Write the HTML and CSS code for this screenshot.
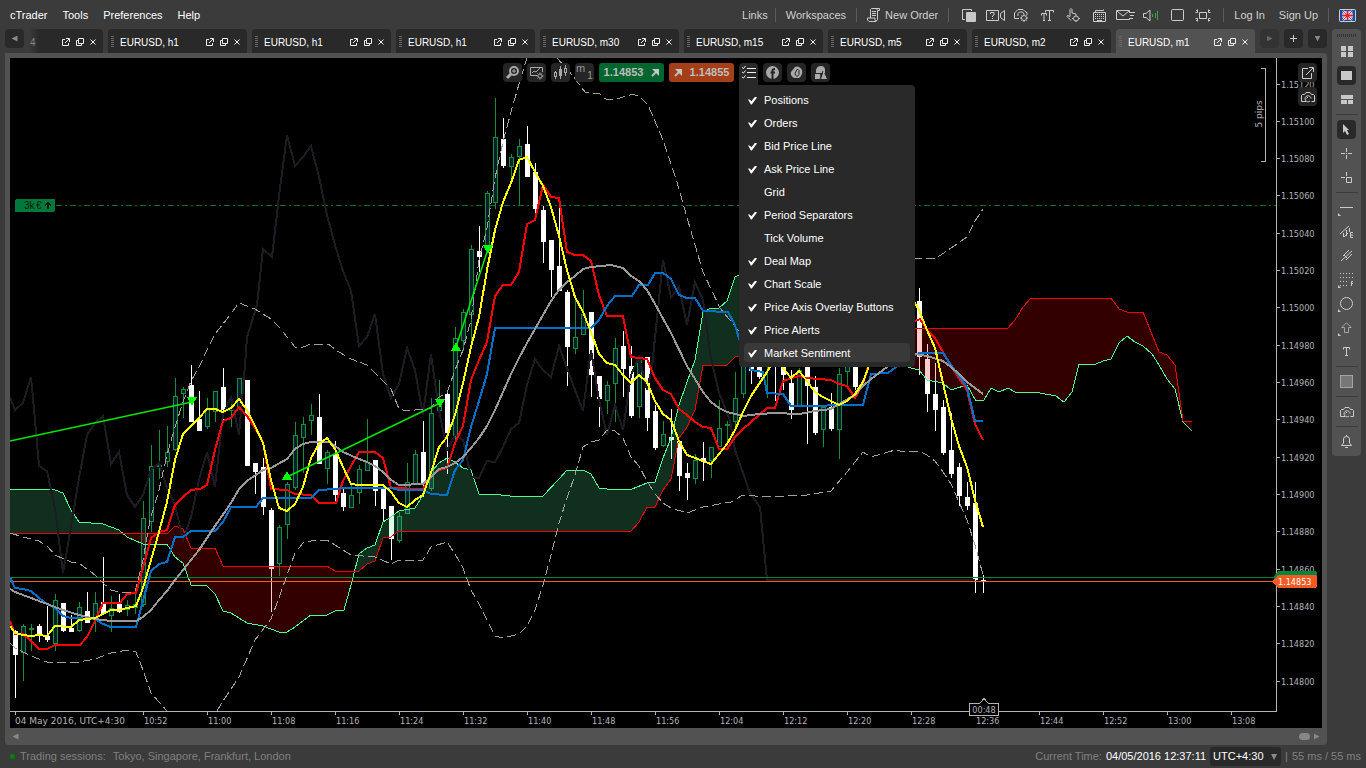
FILE: index.html
```html
<!DOCTYPE html>
<html lang="en">
<head>
    <meta charset="UTF-8">
    <meta name="viewport" content="width=device-width, initial-scale=1.0">
    <title>cTrader</title>
    <link rel="stylesheet" href="styles.css">
</head>
<body>

    <!-- Shared icons -->
    <svg class="sprite" aria-hidden="true">
        <symbol id="i-open" viewBox="0 0 8 8"><path d="M3 1.500H.5v6h6V5M4 .5h3.500V4M7 1 3 5" /></symbol>
        <symbol id="i-copy" viewBox="0 0 8 8"><path d="M2.500.5h5v5h-5zM2 2.500H.5v5h5V6" /></symbol>
        <symbol id="i-close" viewBox="0 0 6 6"><path d="m.5.5 5 5m0-5-5 5" /></symbol>
        <symbol id="i-camera" viewBox="0 0 14 12"><path d="M1.500 10.500H.5v-6l1-1h2l1.500-2h4l1.500 2h2l1 1v6h-3M10 7.500a3 3 0 1 0-1 2.500M1 10.500h4M5.500 7.500l1.500-1.500" /></symbol>
    </svg>

    <header class="menubar">
        <nav class="menu-left">
            <a href="#">cTrader</a>
            <a href="#">Tools</a>
            <a href="#">Preferences</a>
            <a href="#">Help</a>
        </nav>
        <div class="menu-right">
            <a href="#">Links</a>
            <span class="sep"></span>
            <a href="#">Workspaces</a>
            <span class="sep"></span>
            <a href="#" class="new-order">
                <svg width="13" height="14" viewBox="0 0 13 14"><path d="M3.500 10V1.500l1-1h8v2h-2v9l-1.500 2H2l-1.500-1.500V10H8v2l1 1.500M5 3.500h4M5 5.500h4M5 7.500h4M10 2V.5" /></svg>
                New Order
            </a>
            <span class="sep"></span>
            <div class="icons">
                <button aria-label="Layout"><svg width="14" height="13" viewBox="0 0 14 13"><rect class="fill" x="4" y="3" width="10" height="10" rx="1" /><path d="M3 10.500H.5v-10h9V2" /></svg></button>
                <button aria-label="Video help"><svg width="19" height="13" viewBox="0 0 19 13"><path d="M.5 1.500h12v10H.5zM18.500 1.500v10l-4-3v-4zM4.500 5V3.500h3.500V6L6.500 7v1M6.500 9v1" /></svg></button>
                <button aria-label="Snapshot settings"><svg width="14" height="14" viewBox="0 0 14 14"><path d="M5 10.500H.5V5L2 3.500 4 1.500h5l2 2 2 1V7M4 8V5.500L5.500 4h3L10 6" /><circle cx="10" cy="10" r="2.500" /><path d="M10 6v1m0 6v1m-4-4h1m6 0h1M7.500 7.500l.5.5m4 4 .5.5m0-5-.5.5m-4 4-.5.5" /></svg></button>
                <button aria-label="Font size"><svg width="13" height="13" viewBox="0 0 13 13"><path d="M4.500 3.500V1.500h8v2M8.500 2v9.500M7 11.500h3M.5 6.500v-2h5v2M3 5v6.500M2 11.500h2" /></svg></button>
                <button aria-label="Quick trade"><svg width="14" height="14" viewBox="0 0 14 14"><path d="M5 12.500 1 8.500l.5-1L4 8.500v-7l1-1 1 1V5l4 1v1" /><circle cx="10" cy="10.500" r="2.500" /><path d="M10 7v1m0 5v1m-4-3.500h1m6 0h1" /></svg></button>
                <button aria-label="Hotkeys"><svg width="13" height="13" viewBox="0 0 13 13"><path d="M.5 3.500h12v9H.5zM2.500 3V1.500h8V.5" /><path stroke-dasharray="1 1" d="M2 5.500h9M2 7.500h9M2 9.500h9" /><path d="M4 11.500h5" /></svg></button>
                <button aria-label="Email"><svg width="19" height="12" viewBox="0 0 19 12"><path d="M13.500 4V1.500H.5v9h13V9M1 2l6 5 6-5M14 3.500h5M14 6.500h4M14 9.500h3" /></svg></button>
                <button aria-label="Sound"><svg width="16" height="13" viewBox="0 0 16 13"><path d="M.5 4.500H3l4-3.500v11L3 8.500H.5z" /><path class="sound" d="M9.500 5v3M12.500 4v5M14.500 2v9" /></svg></button>
                <button aria-label="Window"><svg width="13" height="12" viewBox="0 0 13 12"><rect x=".5" y=".5" width="12" height="11" rx="1" /></svg></button>
                <button aria-label="Full screen"><svg width="16" height="13" viewBox="0 0 16 13"><path d="M4.500 3.500h7v6h-7zM.5 3.500h2v-3M1 1l2 2M13.500.5v3h2M13 3l2-2M.5 9.500h2v3M1 12l2-2M13.500 12.500v-3h2M13 10l2 2" /></svg></button>
            </div>
            <span class="sep"></span>
            <a href="#">Log In</a>
            <a href="#" class="signup">Sign Up</a>
            <span class="sep"></span>
            <button class="flag" aria-label="Language">
                <svg width="17" height="13" viewBox="0 0 17 13">
                    <rect width="17" height="13" rx="2" fill="#ccc" /><rect x="1" y="1" width="15" height="11" fill="#0a50b4" />
                    <path d="m4 2 9 9m0-9-9 9" stroke="#fff" stroke-width="2" /><path d="M8.500 2v9M3 6.500h11" stroke="#fff" stroke-width="4" />
                    <path d="m4 2 9 9m0-9-9 9" stroke="#e0202c" /><path d="M8.500 2v9M3 6.500h11" stroke="#e0202c" stroke-width="2" />
                </svg>
            </button>
        </div>
    </header>

    <main class="workspace">
        <section class="charts">
            <div class="tabbar">
                <button class="small-btn" aria-label="Scroll tabs left"><i class="arrow left"></i></button>
                <div class="tabs" id="tabs"></div>
                <button class="small-btn off" aria-label="Scroll tabs right"><i class="arrow right"></i></button>
                <button class="small-btn" aria-label="New chart"><svg width="7" height="7" viewBox="0 0 7 7"><path d="M3.500 0v7M0 3.500h7" /></svg></button>
                <button class="small-btn" aria-label="All charts"><i class="arrow down"></i></button>
            </div>

            <div class="panel">
                <div class="chart">
                    <svg class="plot" viewBox="10 58 1312 670" role="img" aria-label="EURUSD, m1 chart">
                        <defs>
                            <clipPath id="area"><rect x="10" y="58" width="1266" height="653" /></clipPath>
                        </defs>
                        <g clip-path="url(#area)">
                            <path class="position" d="M56 205.500H1276" />
                            <g id="candles"></g>

                            <!-- Ichimoku cloud -->
                            <polygon class="cloud-up" points="10,490 43,490 55,491 63,493 71,510 79,522 103,524 119,530 123,533 10,533" />
                            <polygon class="cloud-down" points="123,533 168,533 175,526 183,529 191,549 215,549 223,566 327,566 335,571 355,571 351,585 344,610 335,611 327,615 311,615 295,627 287,632 279,632 263,626 247,623 231,613 223,611 215,594 207,586 191,585 183,563 175,557 167,544 143,544 127,537" />
                            <polygon class="cloud-up" points="355,571 359,554 367,548 375,545 383,522 391,517 399,511 415,508 423,495 431,472 439,463 447,458 455,462 463,468 471,470 479,494 501,495 519,497 543,496 559,479 567,470 583,470 591,474 599,488 607,489 632,489 647,483 655,482 663,458 671,438 679,405 687,382 695,360 703,312 711,308 719,308 727,301 735,277 750,270 750,355 735,357 727,365 703,365 695,410 687,427 679,438 671,479 663,490 655,507 647,507 639,522 631,531 399,531 391,537 383,538 375,561 367,564 359,571" />
                            <polygon class="cloud-down" points="900,328 1008,328 1015,320 1023,307 1031,298 1111,298 1119,309 1127,312 1143,312 1151,332 1159,352 1167,355 1175,365 1183,421 1192,421 1192,431 1183,422 1175,389 1167,379 1159,365 1152,354 1143,346 1135,342 1127,336 1119,343 1111,359 1103,361 1096,364 1079,364 1072,392 1064,402 1056,396 1040,393 1015,392 1008,388 999,392 991,388 984,400 976,401 967,385 951,390 943,383 927,380 919,370 900,365" />
                            <polyline class="span-a" points="10,489 43,489 55,490 63,493 71,510 79,522 103,524 119,530 127,537 143,544 167,544 175,557 183,563 191,585 207,586 215,594 223,611 231,613 247,623 263,626 279,632 287,632 295,627 311,615 327,615 335,611 344,610 351,585 359,554 367,548 375,545 383,522 391,517 399,511 415,508 423,495 431,472 439,463 447,458 455,462 463,468 471,470 479,494 501,495 519,497 543,496 559,479 567,470 583,470 591,474 599,488 607,489 632,489 647,483 655,482 663,458 671,438 679,405 687,382 695,360 703,312 711,308 719,308 727,301 735,277 750,270" />
                            <polyline class="span-a" points="900,365 919,370 927,380 943,383 951,390 967,385 976,401 984,400 991,388 999,392 1008,388 1015,392 1040,393 1056,396 1064,402 1072,392 1079,364 1096,364 1103,361 1111,359 1119,343 1127,336 1135,342 1143,346 1152,354 1159,365 1167,379 1175,389 1183,422 1192,431" />
                            <polyline class="span-b" points="10,533 168,533 175,526 183,529 191,548 215,548 223,566 327,566 335,571 359,571 367,564 375,561 383,538 391,537 399,531 631,531 639,522 647,507 655,507 663,490 671,479 679,438 687,427 695,410 703,365 727,365 735,357 750,355" />
                            <polyline class="span-b" points="900,328 1008,328 1015,320 1023,307 1031,298 1111,298 1119,309 1127,312 1143,312 1151,332 1159,352 1167,355 1175,365 1183,421 1192,421" />

                            <polyline class="lagging" points="10,397 15,410 23,403 31,377 35,420 39,466 47,471 55,508 63,573 71,527 79,478 87,435 95,423 103,416 111,464 119,452 127,495 135,507 143,495 151,470 159,463 167,488 175,505 183,540 191,517 199,480 207,452 215,487 223,415 231,397 239,435 245,365 247,337 257,305 263,249 272,257 279,196 287,135 295,166 303,157 311,146 319,177 327,215 335,245 343,271 351,291 359,346 367,337 375,314 383,374 391,398 399,384 407,348 415,370 423,415 431,354 439,410 447,450 455,435 463,440 471,477 479,478 487,461 495,462 503,447 511,429 519,423 527,385 535,359 543,370 551,377 559,346 567,368 575,390 583,411 591,350 599,400 607,435 615,405 623,430 631,375 639,357 647,390 652,367 663,260 671,297 679,287 687,325 695,282 703,300 710,353 719,393 730,420 735,450 750,493 760,507 767,580 975,580" />
                            <path class="ask" d="M10 577.500H1276" />
                            <path class="bid" d="M10 581.500H1276" />

                            <!-- Bollinger bands -->
                            <polyline class="band" points="10,533 23,537 39,541 47,546 55,555 71,562 79,563 95,575 103,583 111,590 119,592 135,592 143,560 150,520 159,490 167,455 175,427 183,402 191,381 199,367 207,350 215,334 223,324 239,303 255,309 271,319 279,327 295,347 303,347 311,344 328,344 339,352 351,359 367,365 375,373 391,389 399,409 407,411 431,408 439,397 447,393 455,370 463,350 471,320 479,260 487,228 495,178 503,142 511,112 519,84 527,58" />
                            <polyline class="band" points="557,58 573,76 585,92 600,94 607,100 617,99 633,94 640,97 648,105 663,140 677,182 690,228 703,272 720,308 738,330 750,340" />
                            <polyline class="band" points="900,258 935,259 951,248 967,237 975,221 983,209" />
                            <polyline class="band" points="10,643 15,648 31,656 47,662 79,662 95,659 111,653 127,650 136,652 143,670 151,693 167,711" />
                            <polyline class="band" points="217,711 223,701 239,677 255,640 271,619 279,598 287,575 295,553 303,543 315,540 327,540 335,545 351,555 375,557 391,564 399,560 423,560 431,547 447,542 455,554 463,568 471,590 479,604 487,620 495,636 503,638 519,634 527,626 535,610 543,585 551,555 559,523 567,498 575,475 583,447 591,442 599,440 607,430 615,431 623,438 631,457 639,466 647,481 655,494 663,503 671,508 687,513 703,507 719,504 731,502 743,495 767,497 807,495 831,491 847,472 863,452 871,457 895,450 905,452 919,451 927,455 935,461 943,472 951,484 959,502 967,520 975,545 983,575" />

                            <!-- Moving averages -->
                            <polyline class="ma red" points="10,621 15,634 23,634 31,641 39,649 47,649 55,645 80,645 87,637 95,621 103,603 120,603 127,594 136,593 143,568 151,538 159,532 167,530 175,505 183,497 191,490 200,489 207,485 215,450 223,421 231,418 239,407 247,416 255,428 263,442 271,489 287,490 295,494 311,495 319,503 336,503 343,481 351,466 359,452 375,452 383,458 391,488 423,489 431,476 439,470 447,468 455,443 463,426 471,380 479,360 487,342 495,296 503,285 511,285 519,272 527,224 535,220 543,185 551,197 559,198 567,252 575,255 583,255 591,261 599,295 607,316 623,316 631,357 647,359 655,378 663,390 671,394 679,409 687,415 695,422 703,427 711,428 719,449 727,449 735,437 743,429 751,422 759,415 767,408 775,408 783,381 799,376 807,378 831,380 839,384 847,386 855,398 863,384 870,360 890,330 915,321 920,319 927,330 935,338 943,352 951,366 959,378 967,390 975,424 983,440" />
                            <polyline class="ma blue" points="10,577 15,588 23,589 31,591 39,598 47,604 55,608 63,616 71,618 95,619 103,624 111,627 136,627 143,601 151,571 159,564 167,562 175,537 183,537 191,531 215,531 223,522 231,507 256,507 263,498 311,498 319,490 335,489 343,488 391,488 399,490 423,490 431,494 447,495 455,470 463,460 471,427 479,401 487,374 495,328 591,328 599,320 607,306 615,296 632,296 639,285 648,285 655,273 663,273 671,279 679,295 687,298 695,298 703,311 728,312 735,325 743,352 751,370 763,372 767,393 783,394 791,406 863,405 871,374 888,373 896,367 905,360 919,353 943,353 951,365 959,376 967,387 975,421 983,421" />
                            <polyline class="ma gray" points="10,589 15,592 31,598 47,604 63,610 79,615 95,619 111,621 136,621 143,617 151,610 159,600 167,591 175,580 183,570 199,550 215,526 231,503 239,489 247,481 263,470 271,468 287,459 295,449 303,444 311,442 330,442 335,446 343,452 359,459 367,462 375,466 383,472 391,480 399,485 423,484 431,477 439,469 447,467 455,463 463,457 471,448 479,438 487,426 495,410 503,392 511,374 519,358 527,343 535,329 543,315 551,301 559,290 567,282 575,276 583,269 591,267 611,265 623,268 631,276 639,281 647,290 655,304 671,333 687,366 703,392 711,402 719,408 727,412 735,414 743,416 759,414 775,413 799,414 815,411 831,409 839,404 855,395 863,386 871,379 887,367 900,358 915,354 927,356 943,361 951,367 959,374 967,382 975,388 983,394" />
                            <polyline class="ma yellow" points="10,626 15,633 23,635 31,636 39,635 47,636 55,626 71,627 79,620 95,618 111,610 119,610 136,606 143,588 151,560 159,532 167,502 175,460 183,434 191,426 199,418 207,409 215,409 223,412 231,408 239,399 247,410 255,426 263,443 271,480 279,508 287,511 295,504 303,487 311,458 319,444 327,438 335,449 343,467 351,484 359,485 383,485 391,492 399,503 407,507 415,500 423,495 431,473 439,447 447,437 455,415 463,383 471,347 479,317 487,270 495,230 503,202 511,183 519,160 527,157 535,172 543,186 551,207 559,236 567,270 575,297 583,312 591,332 599,354 607,363 615,365 623,375 631,383 639,375 647,382 655,401 663,414 671,420 679,441 687,455 695,458 711,464 719,454 727,444 735,430 743,412 751,396 759,384 767,372 775,358 783,368 791,378 799,371 807,381 815,392 823,397 839,405 847,401 855,394 863,382 869,366 880,340 895,315 915,303 919,310 927,330 935,348 943,383 951,418 959,446 967,467 975,500 983,527" />

                            <!-- Deal map -->
                            <path class="deal" d="M10 441 192 402M287 477 440 403M456 347 488 249" />
                            <path class="deal-mark" d="M187 397h10l-5 9zM435 399h10l-5 9zM483 245h10l-5 9zM282 480h10l-5-9zM451 351h10l-5-9z" />
                        </g>

                        <!-- Position label -->
                        <rect class="position-tag" x="15" y="199" width="40" height="13" rx="2" />
                        <text class="position-text" x="24" y="209">3k</text>
                        <text class="position-text" x="36" y="209">€</text>
                        <path class="position-arrow" d="M48 202.500V209M45 205.500l3-3 3 3" />

                        <!-- Scale bracket -->
                        <path class="axis" d="M1261 68.500h4.500v93H1261" />
                        <text class="label date" text-anchor="middle" transform="translate(1262 114) rotate(-90)">5 pips</text>

                        <path class="axis" d="M1276.500 58V711.500H10" />
                        <g id="priceAxis"></g>
                        <g id="timeAxis"></g>

                        <path class="timer" d="M970.500 703.500h9l4.500-5 4.500 5h10v12h-29v-12z" />
                        <text class="label" x="984" y="713" text-anchor="middle">00:48</text>
                        <path class="ask-tag" d="M1273 577.500 1278 571h37l2 2v9l-2 2h-37z" />
                        <path class="bid-tag" d="M1272 581.500 1278 575h37l2 2v9l-2 2h-37z" />
                        <text class="tag-text" x="1278" y="585">1.14853</text>
                    </svg>

                    <div class="toolbar">
                        <button class="tool" aria-label="Zoom"><svg width="15" height="15" viewBox="0 0 15 15"><circle cx="9" cy="6" r="4" stroke-width="2" /><path d="M9 4v4M7 6h4" /><path d="m6 9-4 4" stroke-width="3" /></svg></button>
                        <button class="tool" aria-label="Chart settings"><svg width="14" height="14" viewBox="0 0 14 14"><path d="M7 9.500H.5v-8h12V6M2 7l2-2 2 1 4-4" /><circle cx="10" cy="10" r="2" /><path d="M10 6.500V8m0 4v1.500M6.500 10H8m4 0h1.500M8 8l-.5-.5m4.500 0-.5.5M8 12l-.5.5m4.500 0-.5-.5" /></svg></button>
                        <button class="tool" aria-label="Chart type"><svg width="13" height="15" viewBox="0 0 13 15"><path d="M1.500 6v8M6.500 1v13M11.500 0v11" /><rect class="solid" x=".5" y="7.500" width="2" height="4" /><rect class="fill" x="5" y="4" width="3" height="7" /><rect class="solid" x="10.500" y="3.500" width="2" height="4" /></svg></button>
                        <button class="tool period" aria-label="Time frame"><span>m</span><sub>1</sub></button>
                        <button class="deal-btn sell">1.14853 <svg width="8" height="8" viewBox="0 0 8 8"><path d="M1 7 6 2" stroke-width="2" /><path class="fill" d="M1 0h7v7z" /></svg></button>
                        <button class="deal-btn buy"><svg width="8" height="8" viewBox="0 0 8 8"><path d="M1 7 6 2" stroke-width="2" /><path class="fill" d="M1 0h7v7z" /></svg> 1.14855</button>
                        <div class="viewing">
                            <button class="tool open" aria-label="Viewing options"><svg width="14" height="13" viewBox="0 0 14 13"><path d="M5 2.500h9M5 6.500h9M5 11.500h9M0 1.500l1.500 1 2-2.500M0 6l1.500 1 2-2.500M0 11l1.500 1 2-2.500" /></svg></button>
                            <div class="dropdown">
                                <label class="option"><input type="checkbox" checked>Positions</label>
                                <label class="option"><input type="checkbox" checked>Orders</label>
                                <label class="option"><input type="checkbox" checked>Bid Price Line</label>
                                <label class="option"><input type="checkbox" checked>Ask Price Line</label>
                                <label class="option"><input type="checkbox">Grid</label>
                                <label class="option"><input type="checkbox" checked>Period Separators</label>
                                <label class="option"><input type="checkbox">Tick Volume</label>
                                <label class="option"><input type="checkbox" checked>Deal Map</label>
                                <label class="option"><input type="checkbox" checked>Chart Scale</label>
                                <label class="option"><input type="checkbox" checked>Price Axis Overlay Buttons</label>
                                <label class="option"><input type="checkbox" checked>Price Alerts</label>
                                <label class="option active"><input type="checkbox" checked>Market Sentiment</label>
                            </div>
                        </div>
                        <button class="tool" aria-label="Indicators"><svg width="13" height="13" viewBox="0 0 13 13"><circle class="fill" cx="6.500" cy="6.500" r="6.500" /><path class="cut" d="M6.500 13V4.500q0-1.500 2.500-1.500M4.500 6.500H9" stroke-width="2" /></svg></button>
                        <button class="tool" aria-label="Sentiment"><svg width="13" height="13" viewBox="0 0 13 13"><path class="fill" d="M1 6 5 1q4-2 7 3 1 5-3 8H4q-4-2-3-6z" /><path class="cut" d="M6.500 11 9 8.500V4.500L7.500 3 5 7q0 2 1.500 3" /></svg></button>
                        <button class="tool" aria-label="Objects"><svg width="13" height="13" viewBox="0 0 13 13"><path class="fill" d="M2 7V4q1-4 5-4t4 4v3zM1 8h5l1 5H1zM9.500 5.500 13 13H7z" /><path class="cut" d="M9 5 6 13M1 7.500h7" /></svg></button>
                    </div>

                    <div class="overlay-buttons">
                        <button class="tool" aria-label="Detach chart"><svg width="12" height="12" viewBox="0 0 12 12"><path d="M6 1.500H.5v10h9V6M7 .5h4.500V5M11 1 4 8" /></svg></button>
                        <button class="tool" aria-label="Chart shot"><svg width="14" height="12"><use href="#i-camera" /></svg></button>
                    </div>
                </div>

                <div class="scroll">
                    <button aria-label="Scroll back"><i class="arrow left"></i></button>
                    <span class="thumb"></span>
                    <button aria-label="Scroll forward"><i class="arrow right"></i></button>
                </div>
            </div>
        </section>

        <aside class="sidebar">
            <span class="grip"></span>
            <button aria-label="Multi chart"><svg width="12" height="11" viewBox="0 0 12 11"><path class="fill" d="M0 0h5v5H0zM7 0h5v5H7zM0 6h5v5H0zM7 6h5v5H7z" /></svg></button>
            <button class="on" aria-label="Single chart"><svg width="11" height="9" viewBox="0 0 11 9"><path class="fill" d="M0 0h11v9H0z" /></svg></button>
            <button aria-label="Free chart"><svg width="12" height="9" viewBox="0 0 12 9"><path class="fill" d="M0 0h12v4H0zM0 5h6v4H0zM7 5h5v4H7z" /></svg></button>
            <hr>
            <button class="on" aria-label="Pointer"><svg width="7" height="11" viewBox="0 0 7 11"><path class="fill" d="M0 0l6 6H4l2 4-2 1-2-4-2 2z" /></svg></button>
            <button aria-label="Crosshair"><svg width="11" height="11" viewBox="0 0 11 11"><path d="M5.500 0v4m0 3v4M0 5.500h4m3 0h4M5 5.500h1" /></svg></button>
            <button aria-label="Market snap"><svg width="11" height="11" viewBox="0 0 11 11"><path d="M5.500 0v4M0 5.500h4M5.500 5.500h5v5h-5z" /></svg></button>
            <hr>
            <button class="more" aria-label="Lines"><svg width="13" height="1" viewBox="0 0 13 1"><path d="M0 .5h13" /></svg></button>
            <button aria-label="Channel"><svg width="13" height="13" viewBox="0 0 13 13"><path d="M0 9l9-8M4 12l4-4M3.500 8v4M6.500 5v6M9.500 3v4M13 7.500h-2.500v5H13M11 10h2" /></svg></button>
            <button aria-label="Pitchfork"><svg width="11" height="11" viewBox="0 0 11 11"><path d="m0 11 11-10M2 6l6-6M5 10l6-6M3 5l4 4" /></svg></button>
            <button class="more" aria-label="Fibonacci"><svg width="13" height="13" viewBox="0 0 13 13"><path stroke-dasharray="1 2" d="M0 .5h13M0 4.500h13M0 8.500h9M0 12.500h9" /><path d="M11.500 13V8.500H14M11 10.500h2" /></svg></button>
            <button class="more" aria-label="Shapes"><svg width="13" height="13" viewBox="0 0 13 13"><circle cx="6.500" cy="6.500" r="6" /></svg></button>
            <button class="more dim" aria-label="Arrows"><svg width="11" height="11" viewBox="0 0 11 11"><path d="M5.500.8.8 5.500h2.700v5h4v-5h2.700z" /></svg></button>
            <button aria-label="Text"><svg width="7" height="9" viewBox="0 0 7 9"><path d="M.5 2.500v-2h6v2M3.500 1v7.500M2 8.500h3" /></svg></button>
            <hr>
            <button class="dim" aria-label="Color"><svg width="13" height="13" viewBox="0 0 13 13"><rect x=".5" y=".5" width="12" height="12" fill="#777" /></svg></button>
            <hr>
            <button aria-label="Snapshot"><svg width="14" height="12"><use href="#i-camera" /></svg></button>
            <hr>
            <button aria-label="Alerts"><svg width="11" height="13" viewBox="0 0 11 13"><path d="M5.500 0v1.500M.5 10.500l2-2.500V4q0-2.500 3-2.500t3 2.500v4l2 2.500zM4 12.500h3" /></svg></button>
        </aside>
    </main>

    <footer class="status">
        <span class="dot"></span>
        <span>Trading sessions:</span>
        <span class="sessions">Tokyo, Singapore, Frankfurt, London</span>
        <label class="push" for="zone">Current Time:</label>
        <span class="now">04/05/2016 12:37:11</span>
        <span class="zone">
            <select id="zone"><option>UTC+4:30</option></select>
            <i class="arrow down"></i>
        </span>
        <span>|</span>
        <span>55 ms / 55 ms</span>
    </footer>

    <script src="chart.js"></script>
</body>
</html>
```
FILE: chart.js
```js
// The first tab is scrolled out, only the end of its name is left
const tabs = ['4', 'EURUSD, h1', 'EURUSD, h1', 'EURUSD, h1', 'EURUSD, m30', 'EURUSD, m15', 'EURUSD, m5', 'EURUSD, m2', 'EURUSD, m1'];

document.getElementById('tabs').innerHTML = tabs.map((name, i) => `
    <div class="tab${i === 0 ? ' scrolled' : ''}${i === tabs.length - 1 ? ' active' : ''}">
        ${i === 0 ? '' : '<span class="grip"></span>'}
        <a href="#">${name}</a>
        <button aria-label="Detach"><svg width="8" height="8"><use href="#i-open" /></svg></button>
        <button aria-label="Duplicate"><svg width="8" height="8"><use href="#i-copy" /></svg></button>
        <button aria-label="Close"><svg width="6" height="6"><use href="#i-close" /></svg></button>
    </div>`).join('');

// [high, body top, body bottom, low, rising]
const candles = [
    [630,631,655,698,0],[624,626,653,681,1],[624,628,630,651,1],[624,626,636,642,0],[606,636,640,642,0],
    [594,600,644,651,1],[603,603,631,632,0],[615,628,632,632,0],[602,607,631,632,1],[592,611,623,623,0],
    [592,603,619,632,1],[557,602,614,615,0],[596,608,616,632,1],[594,604,612,613,0],[600,605,610,616,1],
    [594,604,608,614,1],[501,518,605,607,1],[445,466,522,532,1],[430,465,467,479,1],[426,452,462,467,1],
    [378,396,450,451,1],[387,389,394,418,1],[365,385,422,422,0],[391,419,431,431,0],[398,409,427,429,1],
    [391,391,412,422,1],[368,387,410,422,0],[399,407,411,427,1],[378,378,407,410,1],[380,380,466,466,0],
    [463,463,472,494,0],[458,467,507,515,0],[508,510,569,612,0],[525,527,564,576,1],[482,484,525,539,1],
    [422,435,488,490,1],[417,424,438,473,1],[404,415,421,435,1],[394,417,464,464,0],[450,452,469,484,1],
    [441,455,495,502,0],[489,493,507,511,0],[485,495,508,508,1],[465,469,493,504,1],[419,462,471,471,1],
    [460,460,491,506,0],[489,489,509,522,0],[506,506,539,560,0],[512,516,541,543,1],[463,482,514,514,1],
    [450,454,484,485,1],[421,452,484,497,0],[398,413,489,491,1],[380,403,411,411,1],[390,394,433,474,0],
    [327,338,436,440,1],[309,312,341,351,1],[245,249,315,343,1],[226,251,257,272,0],[191,193,246,250,1],
    [98,137,203,209,1],[118,139,166,168,0],[154,157,167,183,1],[139,146,157,205,1],[126,144,177,177,0],
    [163,172,209,217,0],[206,210,242,263,0],[240,240,270,297,0],[206,266,291,291,0],[290,292,347,386,0],
    [297,337,349,354,1],[290,314,335,335,1],[312,312,375,397,0],[376,376,399,427,0],[381,385,401,414,1],
    [338,348,384,422,1],[331,346,369,397,0],[346,366,416,418,0],[359,360,407,418,1],[357,357,418,431,0],
    [405,411,448,450,0],[421,434,446,447,1],[409,437,440,459,0],[441,441,476,491,0],[463,473,478,500,0],
    [454,460,479,484,1],[442,458,461,481,0],[447,447,461,478,1],[400,428,447,447,1],[421,424,426,443,1],
    [372,398,422,426,1],[355,360,394,398,1],[340,350,371,384,0],[340,350,377,379,0],[340,350,367,398,1],
    [340,350,366,401,0],[340,350,375,390,0],[370,383,410,419,0],[368,370,407,407,1],[340,350,386,444,0],
    [376,387,433,435,0],[407,407,430,447,1],[393,407,429,431,0],[368,374,430,459,1],[340,350,372,386,1],
    [340,350,387,390,0],null,null,null,null,null,null,null,
    [288,301,357,375,0],[344,359,394,412,0],[363,394,410,431,0],[400,407,453,455,0],[413,450,474,478,0],
    [463,467,496,506,0],[482,497,506,510,0],[482,503,580,593,0],[575,580,581,593,0]
];

document.getElementById('candles').innerHTML = candles.map((c, i) => {
    if (!c) return '';
    const x = 15 + i * 8;
    const [high, top, bottom, low, up] = c;
    const wick = `<path d="M${x + 0.5} ${high}V${low}" />`;
    const body = up
        ? `<rect x="${x - 1.5}" y="${top + 0.5}" width="4" height="${Math.max(bottom - top - 1, 1)}" />`
        : `<rect x="${x - 2}" y="${top}" width="5" height="${bottom - top}" />`;
    return `<g class="${up ? 'up' : 'down'}">${wick}${body}</g>`;
}).join('');

// Price axis, 20 points a step
let prices = '';
for (let i = 0; i <= 16; i++) {
    const y = Math.round(83.5 + i * 37.33);
    prices += `<path class="axis" d="M1277 ${y + 0.5}h3" />`;
    prices += `<text class="label" x="1281" y="${y + 4}">${(1.1512 - i * 0.0002).toFixed(5)}</text>`;
}
document.getElementById('priceAxis').innerHTML = prices;

// Time axis, 8 minutes a step
let times = '<path class="axis" d="M15.5 712v3" /><text class="label date" x="15" y="724">04 May 2016, UTC+4:30</text>';
for (let i = 0; i <= 17; i++) {
    const minutes = 10 * 60 + 52 + i * 8;
    const x = 143 + i * 64;
    const text = Math.floor(minutes / 60) + ':' + String(minutes % 60).padStart(2, '0');
    times += `<path class="axis" d="M${x + 0.5} 712v3" /><text class="label" x="${x + 1}" y="724">${text}</text>`;
}
document.getElementById('timeAxis').innerHTML = times;
```
FILE: styles.css
```css
* {
    box-sizing: border-box;
}

body {
    margin: 0;
    min-height: 100vh;
    display: flex;
    flex-direction: column;
    background: #3b3b3b;
    color: #fff;
    font-family: "Liberation Sans", Arial, sans-serif;
    font-size: 11px;
    line-height: 13px;
}

a {
    color: inherit;
    text-decoration: none;
    white-space: nowrap;
}

button {
    display: flex;
    align-items: center;
    justify-content: center;
    padding: 0;
    border: none;
    background: none;
    color: inherit;
    font: inherit;
    cursor: pointer;
}

svg {
    display: block;
    flex: none;
    fill: none;
    stroke: #ccc;
}

svg .fill {
    fill: #c8c8c8;
    stroke: none;
}

.sprite {
    position: absolute;
    width: 0;
    height: 0;
}

.arrow {
    width: 6px;
    height: 6px;
    background: #8a8a8a;
}

.arrow.left {
    clip-path: polygon(100% 0, 100% 100%, 0 50%);
}

.arrow.right {
    clip-path: polygon(0 0, 100% 50%, 0 100%);
}

.arrow.down {
    clip-path: polygon(0 0, 100% 0, 50% 100%);
}

/* Menu bar */
.menubar {
    display: flex;
    justify-content: space-between;
    align-items: center;
    height: 29px;
    padding: 1px 10px 0 10px;
}

.menu-left {
    display: flex;
    gap: 15px;
}

.menu-right {
    display: flex;
    align-items: center;
    gap: 10px;
    color: #d0d0d0;
}

.menu-right .sep {
    width: 1px;
    height: 14px;
    background: #5c5c5c;
}

.menu-right .sep:first-of-type {
    margin-left: -3px;
}

.new-order {
    display: flex;
    align-items: center;
    gap: 5px;
}

.icons {
    display: flex;
    gap: 6px;
}

.icons button {
    width: 20px;
    height: 16px;
}

.signup {
    margin-left: 4px;
}

.sound {
    stroke: #3fa14b;
}

.flag svg {
    stroke: none;
}

/* Workspace */
.workspace {
    flex: 1;
    display: flex;
    align-items: flex-start;
    gap: 5px;
    padding: 0 5px;
}

.charts {
    flex: 1;
    min-width: 0;
}

.tabbar {
    display: flex;
    gap: 5px;
    height: 24px;
}

.small-btn {
    flex: none;
    width: 19px;
    height: 19px;
    border-radius: 4px;
    background: #292929;
}

.small-btn.off {
    background: #333;
}

.small-btn.off .arrow {
    background: #666;
}

.tabs {
    flex: 1;
    min-width: 0;
    display: flex;
    justify-content: flex-end;
    gap: 5px;
}

.tab {
    flex: none;
    display: flex;
    align-items: center;
    gap: 6px;
    width: 139px;
    padding: 2px 7px 0 3px;
    border-radius: 4px 4px 0 0;
    background: #292929;
    font-size: 10px;
}

.tab.scrolled {
    width: 74px;
    padding-left: 1px;
    background: linear-gradient(to right, #3b3b3b, #292929 10px);
    border-radius: 0 4px 0 0;
}

.tab.scrolled a {
    color: #888;
}

.tab.active {
    background: #525252;
}

.tab a {
    flex: 1;
}

.tab svg {
    stroke: #eee;
}

.tab .grip {
    width: 3px;
    height: 12px;
    background: repeating-linear-gradient(#666 0 1px, transparent 1px 2px);
}

.panel {
    padding: 5px 5px 0;
    border-radius: 0 4px 4px 4px;
    background: #525252;
}

.chart {
    position: relative;
    background: #000;
}

.plot {
    width: 100%;
    height: auto;
    shape-rendering: crispEdges;
    stroke: none;
}

.axis {
    stroke: #b4b4b4;
}

.label,
.tag-text {
    fill: #b4b4b4;
    font-family: "DejaVu Sans Condensed", "DejaVu Sans", sans-serif;
    font-size: 9px;
}

.label.date {
    font-family: "DejaVu Sans", sans-serif;
}

.tag-text {
    fill: #fff;
}

.up {
    stroke: #129138;
    fill: #0a1e30;
}

.down path {
    stroke: #fff;
}

.down rect {
    fill: #fff;
}

.cloud-up {
    fill: rgba(85, 235, 155, 0.2);
}

.cloud-down {
    fill: rgba(255, 0, 0, 0.2);
}

.span-a {
    stroke: #4dff8c;
}

.span-b {
    stroke: #f00000;
}

.band {
    stroke: #a0a0a0;
    stroke-dasharray: 9 4;
}

.lagging {
    stroke: #1d1c22;
    stroke-width: 2;
}

.ma {
    stroke-width: 2;
}

.ma.red {
    stroke: #f00;
}

.ma.blue {
    stroke: #0070c8;
}

.ma.gray {
    stroke: #999;
}

.ma.yellow {
    stroke: #ff0;
}

.ask {
    stroke: #00853c;
}

.bid {
    stroke: #f15a22;
}

.ask-tag {
    fill: #00853c;
}

.bid-tag {
    fill: #f15a22;
}

.deal {
    stroke: #00e800;
    stroke-width: 1.5;
    shape-rendering: auto;
}

.deal-mark {
    fill: #0f0;
}

.position {
    stroke: #00703c;
    stroke-dasharray: 6 3 2 3;
}

.position-tag {
    fill: #00793a;
}

.position-text {
    fill: #001c0d;
    font-size: 10px;
}

.position-arrow {
    stroke: #001c0d;
    stroke-width: 2;
}

.timer {
    fill: #000;
    stroke: #b4b4b4;
}

/* Chart toolbar */
.toolbar {
    position: absolute;
    top: 5px;
    left: 50%;
    transform: translateX(-50%);
    display: flex;
    align-items: flex-start;
    gap: 5px;
    padding-left: 1px;
}

.tool {
    flex: none;
    width: 19px;
    height: 19px;
    border-radius: 4px;
    background: #252525;
}

.tool svg {
    stroke: #aaa;
}

.tool svg .fill {
    fill: #aaa;
}

.tool svg .solid {
    fill: #252525;
}

.tool svg .cut {
    stroke: #252525;
}

.tool.open {
    height: 22px;
    padding-bottom: 3px;
    border-radius: 4px 4px 0 0;
    background: #292929;
}

.tool.open svg {
    stroke: #eee;
}

.period {
    align-items: flex-start;
    justify-content: space-around;
    color: #999;
}

.period sub {
    align-self: flex-end;
    font-size: 10px;
    line-height: 13px;
    vertical-align: baseline;
}

.period span {
    line-height: 11px;
}

.deal-btn {
    gap: 8px;
    width: 65px;
    height: 19px;
    border-radius: 3px;
    background: #00662f;
    color: #bdbdbd;
    font-weight: bold;
}

.deal-btn.buy {
    background: #a53f17;
}

.deal-btn svg {
    stroke: #bdbdbd;
}

.viewing {
    position: relative;
}

.dropdown {
    position: absolute;
    top: 100%;
    left: 0;
    display: flex;
    flex-direction: column;
    gap: 4px;
    width: 176px;
    padding: 5px;
    border-radius: 0 4px 4px 4px;
    background: #292929;
}

.option {
    display: flex;
    align-items: center;
    gap: 7px;
    height: 19px;
    padding: 2px 0 0 4px;
    border-radius: 4px;
    white-space: nowrap;
}

.option.active {
    background: #393939;
}

.option input {
    appearance: none;
    width: 9px;
    height: 8px;
    margin: 0;
}

.option input:checked {
    background: #fff;
    clip-path: polygon(0 38%, 18% 38%, 38% 60%, 80% 0, 100% 12%, 42% 100%, 32% 100%);
}

.overlay-buttons {
    position: absolute;
    top: 5px;
    right: 5px;
    display: flex;
    flex-direction: column;
    gap: 5px;
}

.overlay-buttons svg {
    stroke: #ccc;
}

.scroll {
    display: flex;
    align-items: center;
    height: 17px;
}

.scroll button {
    width: 11px;
    height: 17px;
}

.scroll .thumb {
    width: 11px;
    height: 7px;
    margin: 0 1px 0 auto;
    border-radius: 4px;
    background: #868686;
}

/* Drawing tools */
.sidebar {
    flex: none;
    display: flex;
    flex-direction: column;
    align-items: center;
    gap: 5px;
    width: 29px;
    padding: 5px 0 5px;
    border-radius: 4px;
    background: #525252;
}

.sidebar .grip {
    width: 19px;
    height: 3px;
    background: repeating-linear-gradient(to right, #333 0 1px, transparent 1px 2px);
}

.sidebar hr {
    width: 22px;
    height: 1px;
    margin: 0;
    border: none;
    background: #3b3b3b;
}

.sidebar button {
    position: relative;
    width: 19px;
    height: 19px;
    border-radius: 4px;
}

.sidebar button.on {
    background: #292929;
}

.sidebar .dim svg {
    stroke: #a4a4a4;
}

.sidebar .more::after {
    content: "";
    position: absolute;
    left: 1px;
    bottom: 1px;
    width: 3px;
    height: 3px;
    background: #ccc;
    clip-path: polygon(0 0, 100% 100%, 0 100%);
}

/* Status bar */
.status {
    display: flex;
    align-items: center;
    gap: 4px;
    height: 23px;
    padding: 0 5px 0 10px;
    color: #808080;
    white-space: nowrap;
}

.status .dot {
    width: 5px;
    height: 5px;
    margin-right: 1px;
    border-radius: 50%;
    background: #008000;
}

.sessions {
    margin-left: 3px;
}

.push {
    margin-left: auto;
}

.now {
    color: #fff;
}

.zone {
    position: relative;
    display: flex;
}

.zone select {
    appearance: none;
    width: 71px;
    height: 19px;
    padding: 0 3px;
    border: none;
    border-radius: 3px;
    background: #292929;
    color: #fff;
    font: inherit;
}

.zone .arrow {
    position: absolute;
    right: 4px;
    top: 7px;
    pointer-events: none;
}
```
